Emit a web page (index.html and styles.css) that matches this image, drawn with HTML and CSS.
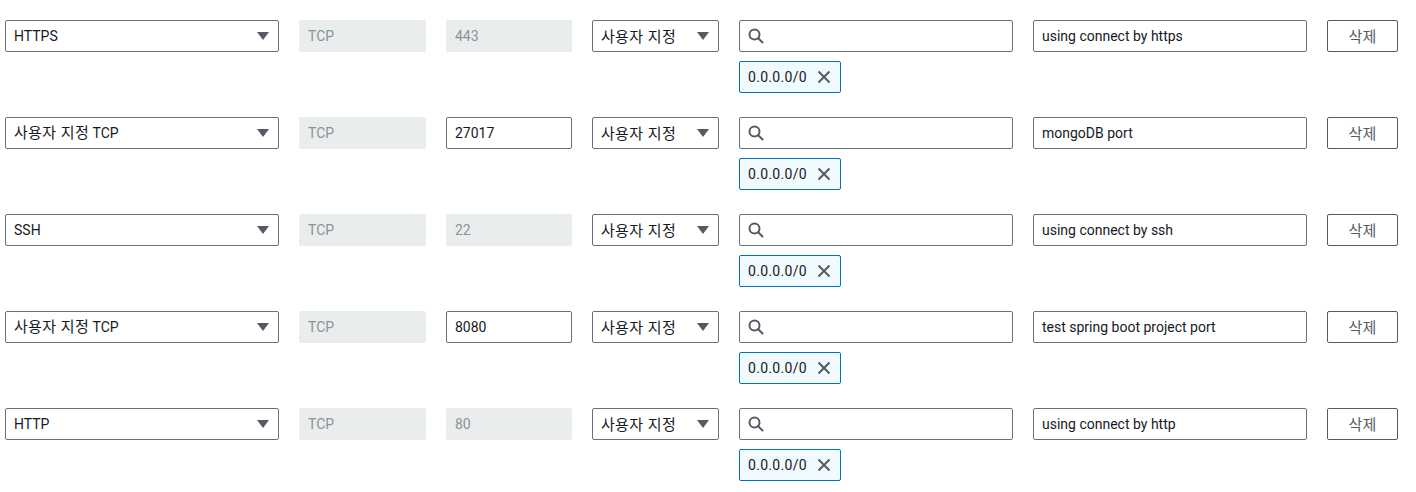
FILE: index.html
```html
<!DOCTYPE html>
<html lang="ko">
<head>
<meta charset="utf-8">
<link rel="stylesheet" href="styles.css">
</head>
<body>
<div class="rules">
  <div class="rule">
    <div class="field select"><span>HTTPS</span><svg class="caret" viewBox="0 0 12 8"><path d="M0 0h12L6 8z"/></svg></div>
    <div class="field disabled">TCP</div>
    <div class="field disabled">443</div>
    <div class="field select"><span class="ko">사용자 지정</span><svg class="caret" viewBox="0 0 12 8"><path d="M0 0h12L6 8z"/></svg></div>
    <div class="source">
      <div class="field search"><svg class="mag" viewBox="0 0 16 16"><circle cx="6.5" cy="6.5" r="5" /><path d="M10 10l4.5 4.5"/></svg></div>
      <div class="token"><span>0.0.0.0/0</span><svg class="x" viewBox="0 0 14 14"><path d="M1.5 1.5l11 11M12.5 1.5l-11 11"/></svg></div>
    </div>
    <div class="field">using connect by https</div>
    <button class="btn"><span class="ko">삭제</span></button>
  </div>
  <div class="rule">
    <div class="field select"><span class="mix"><span class="kin">사용자 지정</span> TCP</span><svg class="caret" viewBox="0 0 12 8"><path d="M0 0h12L6 8z"/></svg></div>
    <div class="field disabled">TCP</div>
    <div class="field">27017</div>
    <div class="field select"><span class="ko">사용자 지정</span><svg class="caret" viewBox="0 0 12 8"><path d="M0 0h12L6 8z"/></svg></div>
    <div class="source">
      <div class="field search"><svg class="mag" viewBox="0 0 16 16"><circle cx="6.5" cy="6.5" r="5" /><path d="M10 10l4.5 4.5"/></svg></div>
      <div class="token"><span>0.0.0.0/0</span><svg class="x" viewBox="0 0 14 14"><path d="M1.5 1.5l11 11M12.5 1.5l-11 11"/></svg></div>
    </div>
    <div class="field">mongoDB port</div>
    <button class="btn"><span class="ko">삭제</span></button>
  </div>
  <div class="rule">
    <div class="field select"><span>SSH</span><svg class="caret" viewBox="0 0 12 8"><path d="M0 0h12L6 8z"/></svg></div>
    <div class="field disabled">TCP</div>
    <div class="field disabled">22</div>
    <div class="field select"><span class="ko">사용자 지정</span><svg class="caret" viewBox="0 0 12 8"><path d="M0 0h12L6 8z"/></svg></div>
    <div class="source">
      <div class="field search"><svg class="mag" viewBox="0 0 16 16"><circle cx="6.5" cy="6.5" r="5" /><path d="M10 10l4.5 4.5"/></svg></div>
      <div class="token"><span>0.0.0.0/0</span><svg class="x" viewBox="0 0 14 14"><path d="M1.5 1.5l11 11M12.5 1.5l-11 11"/></svg></div>
    </div>
    <div class="field">using connect by ssh</div>
    <button class="btn"><span class="ko">삭제</span></button>
  </div>
  <div class="rule">
    <div class="field select"><span class="mix"><span class="kin">사용자 지정</span> TCP</span><svg class="caret" viewBox="0 0 12 8"><path d="M0 0h12L6 8z"/></svg></div>
    <div class="field disabled">TCP</div>
    <div class="field">8080</div>
    <div class="field select"><span class="ko">사용자 지정</span><svg class="caret" viewBox="0 0 12 8"><path d="M0 0h12L6 8z"/></svg></div>
    <div class="source">
      <div class="field search"><svg class="mag" viewBox="0 0 16 16"><circle cx="6.5" cy="6.5" r="5" /><path d="M10 10l4.5 4.5"/></svg></div>
      <div class="token"><span>0.0.0.0/0</span><svg class="x" viewBox="0 0 14 14"><path d="M1.5 1.5l11 11M12.5 1.5l-11 11"/></svg></div>
    </div>
    <div class="field">test spring boot project port</div>
    <button class="btn"><span class="ko">삭제</span></button>
  </div>
  <div class="rule">
    <div class="field select"><span>HTTP</span><svg class="caret" viewBox="0 0 12 8"><path d="M0 0h12L6 8z"/></svg></div>
    <div class="field disabled">TCP</div>
    <div class="field disabled">80</div>
    <div class="field select"><span class="ko">사용자 지정</span><svg class="caret" viewBox="0 0 12 8"><path d="M0 0h12L6 8z"/></svg></div>
    <div class="source">
      <div class="field search"><svg class="mag" viewBox="0 0 16 16"><circle cx="6.5" cy="6.5" r="5" /><path d="M10 10l4.5 4.5"/></svg></div>
      <div class="token"><span>0.0.0.0/0</span><svg class="x" viewBox="0 0 14 14"><path d="M1.5 1.5l11 11M12.5 1.5l-11 11"/></svg></div>
    </div>
    <div class="field">using connect by http</div>
    <button class="btn"><span class="ko">삭제</span></button>
  </div>
</div>
</body>
</html>
```

FILE: styles.css
```css
* { box-sizing: border-box; }
body {
  margin: 0;
  background: #fff;
  font-family: Roboto, "Noto Sans CJK KR", sans-serif;
  font-size: 14px;
  color: #16191f;
}
.rules {
  padding: 20px 0 0 5px;
  display: flex;
  flex-direction: column;
  gap: 24px;
}
.rule {
  display: grid;
  grid-template-columns: 274px 127px 126px 127px 274px 274px 71px;
  column-gap: 20px;
  align-items: start;
}
.field {
  height: 32px;
  border: 1px solid #687078;
  border-radius: 2px;
  padding: 0 8px;
  display: flex;
  align-items: center;
  white-space: nowrap;
  overflow: hidden;
  background: #fff;
}
.ko {
  display: inline-block;
  font-family: "Noto Sans CJK KR", sans-serif;
  font-size: 15px;
  letter-spacing: 0.3px;
  transform: translateY(-1px);
}
.kin {
  font-family: "Noto Sans CJK KR", sans-serif;
  font-size: 15px;
  letter-spacing: 0.3px;
}
.mix {
  display: inline-block;
  line-height: 20px;
  transform: translateY(-1px);
}
.field.disabled {
  background: #eaeded;
  border-color: #eaeded;
  color: #879596;
}
.select { justify-content: space-between; padding-right: 9px; }
.caret { width: 12px; height: 8px; fill: #545b64; flex: none; }
.source { display: flex; flex-direction: column; gap: 9px; align-items: flex-start; }
.search { width: 274px; }
.mag { width: 16px; height: 16px; fill: none; stroke: #545b64; stroke-width: 2; stroke-linecap: round; }
.token {
  height: 32px;
  display: flex;
  align-items: center;
  gap: 10px;
  padding: 0 9px 0 8px;
  border: 1px solid #0073bb;
  border-radius: 2px;
  background: #f1faff;
}
.token span { letter-spacing: 0.3px; }
.x { width: 14px; height: 14px; fill: none; stroke: #545b64; stroke-width: 2; }
.btn {
  height: 32px;
  border: 1px solid #545b64;
  border-radius: 2px;
  background: #fff;
  color: #545b64;
  font-family: inherit;
  font-size: 14px;
  padding: 0;
}
```
